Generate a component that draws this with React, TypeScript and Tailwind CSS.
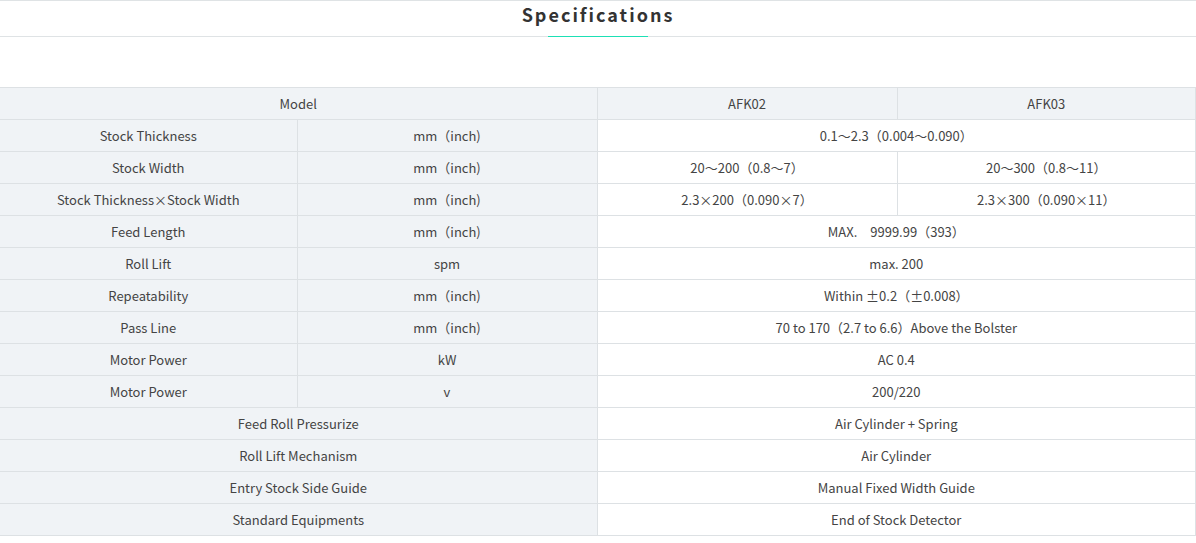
const font = { fontFamily: '"Noto Sans CJK SC", "Noto Sans", sans-serif' };

type Row = { label: string; unit?: string; a: string; b?: string };

const rows: Row[] = [
  { label: "Stock Thickness", unit: "mm（inch)", a: "0.1～2.3（0.004～0.090）" },
  { label: "Stock Width", unit: "mm（inch)", a: "20～200（0.8～7）", b: "20～300（0.8～11）" },
  { label: "Stock Thickness×Stock Width", unit: "mm（inch)", a: "2.3×200（0.090×7）", b: "2.3×300（0.090×11）" },
  { label: "Feed Length", unit: "mm（inch)", a: "MAX.　9999.99（393）" },
  { label: "Roll Lift", unit: "spm", a: "max. 200" },
  { label: "Repeatability", unit: "mm（inch)", a: "Within ±0.2（±0.008）" },
  { label: "Pass Line", unit: "mm（inch)", a: "70 to 170（2.7 to 6.6）Above the Bolster" },
  { label: "Motor Power", unit: "kW", a: "AC 0.4" },
  { label: "Motor Power", unit: "v", a: "200/220" },
  { label: "Feed Roll Pressurize", a: "Air Cylinder + Spring" },
  { label: "Roll Lift Mechanism", a: "Air Cylinder" },
  { label: "Entry Stock Side Guide", a: "Manual Fixed Width Guide" },
  { label: "Standard Equipments", a: "End of Stock Detector" },
];

const gray = "h-8 border border-[#dde1e4] bg-[#f0f3f6] p-0 text-center align-middle";
const white = "h-8 border border-[#dde1e4] bg-white p-0 text-center align-middle";

export default function App() {
  return (
    <div className="w-[1196px] bg-white text-[13px] text-[#444]" style={font}>
      <div className="border-t border-[#dfe3e5]">
        <div className="relative flex h-9 items-center justify-center border-b border-[#dfe3e5]">
          <h2 className="mt-[-8px] text-[18px] font-bold tracking-[2px] text-[#333]">Specifications</h2>
          <span className="absolute bottom-[-1px] left-[548px] h-px w-[100px] bg-[#1de0b5]" />
        </div>
      </div>
      <div className="h-[50px]" />
      <table className="w-[1196px] table-fixed border-collapse">
        <colgroup>
          <col className="w-[297px]" />
          <col className="w-[300px]" />
          <col className="w-[300px]" />
          <col />
        </colgroup>
        <tbody>
          <tr>
            <td colSpan={2} className={gray + " border-l-0"}>Model</td>
            <td className={gray}>AFK02</td>
            <td className={gray}>AFK03</td>
          </tr>
          {rows.map((r, i) => (
            <tr key={i}>
              {r.unit ? (
                <>
                  <td className={gray + " border-l-0"}>{r.label}</td>
                  <td className={gray}>{r.unit}</td>
                </>
              ) : (
                <td colSpan={2} className={gray + " border-l-0"}>{r.label}</td>
              )}
              {r.b ? (
                <>
                  <td className={white}>{r.a}</td>
                  <td className={white}>{r.b}</td>
                </>
              ) : (
                <td colSpan={2} className={white}>{r.a}</td>
              )}
            </tr>
          ))}
        </tbody>
      </table>
    </div>
  );
}
